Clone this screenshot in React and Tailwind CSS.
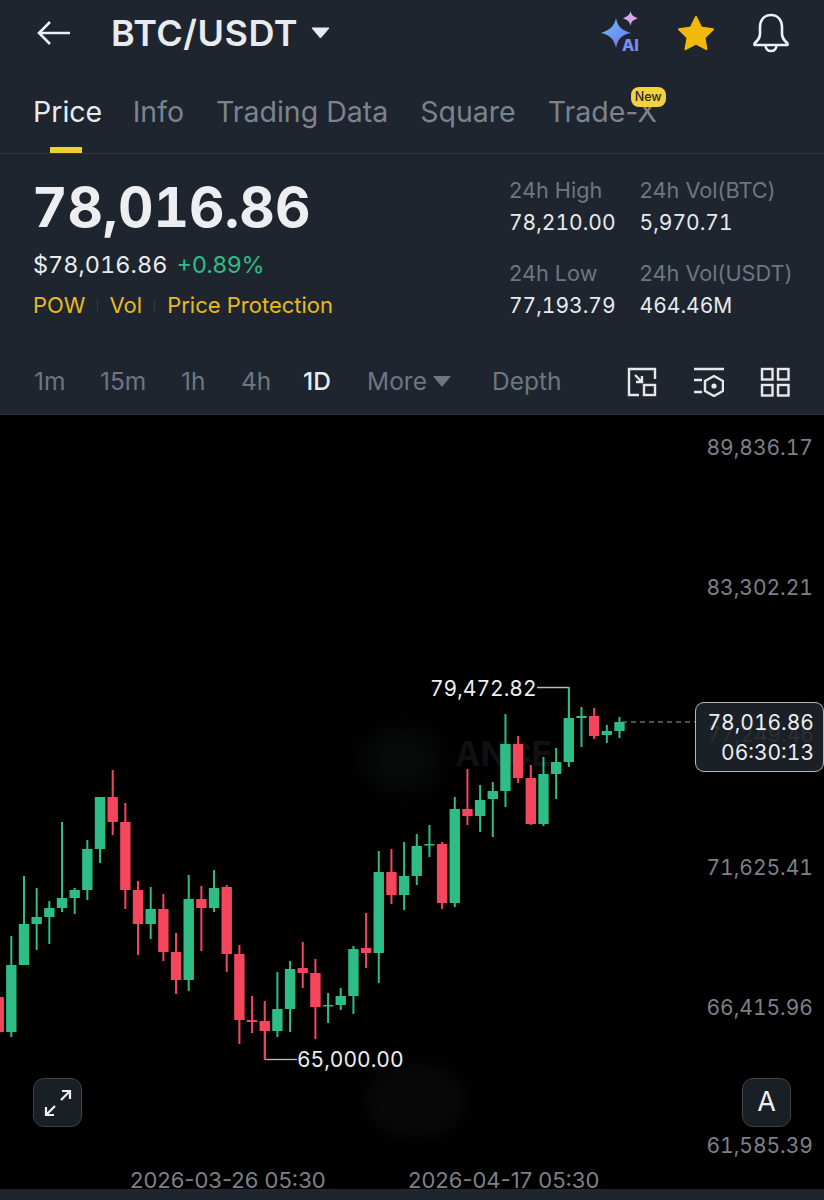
const GREEN = "#2ebd85";
const RED = "#f6465d";

// [index, up?, wickTop, wickBottom, bodyTop, bodyBottom] in page pixels
const CANDLES = [
  [-1, 0, 975, 1037, 997, 1032],
  [0, 1, 936, 1037, 965, 1032],
  [1, 1, 876, 965, 924, 965],
  [2, 1, 888, 950, 917, 924],
  [3, 1, 901, 944, 908, 917],
  [4, 1, 822, 912, 898, 908],
  [5, 1, 888, 914, 890, 898],
  [6, 1, 840, 900, 849, 890],
  [7, 1, 797, 863, 797, 849],
  [8, 0, 770, 835, 797, 822],
  [9, 0, 803, 909, 822, 890],
  [10, 0, 881, 955, 890, 924],
  [11, 1, 887, 939, 909, 924],
  [12, 0, 894, 961, 909, 952],
  [13, 0, 933, 994, 952, 980],
  [14, 1, 875, 991, 899, 980],
  [15, 0, 886, 951, 899, 908],
  [16, 1, 870, 912, 888, 908],
  [17, 0, 885, 972, 887, 954],
  [18, 0, 945, 1044, 954, 1020],
  [19, 0, 996, 1033, 1020, 1022],
  [20, 0, 1001, 1060, 1021, 1031],
  [21, 1, 972, 1037, 1009, 1031],
  [22, 1, 961, 1032, 969, 1009],
  [23, 0, 942, 988, 968, 973],
  [24, 0, 959, 1039, 973, 1007],
  [25, 1, 993, 1023, 1005, 1006],
  [26, 1, 988, 1010, 996, 1005],
  [27, 1, 946, 1014, 949, 996],
  [28, 0, 913, 968, 948, 953],
  [29, 1, 851, 983, 872, 953],
  [30, 0, 849, 904, 872, 895],
  [31, 1, 842, 910, 876, 895],
  [32, 1, 834, 885, 846, 876],
  [33, 1, 825, 857, 844, 845],
  [34, 0, 842, 909, 844, 903],
  [35, 1, 797, 907, 809, 903],
  [36, 0, 769, 825, 809, 816],
  [37, 1, 785, 832, 800, 816],
  [38, 1, 782, 837, 791, 799],
  [39, 1, 714, 807, 744, 791],
  [40, 0, 736, 783, 744, 778],
  [41, 0, 765, 825, 778, 824],
  [42, 1, 757, 826, 774, 824],
  [43, 1, 748, 799, 762, 774],
  [44, 1, 687, 767, 718, 762],
  [45, 1, 707, 747, 716, 718],
  [46, 0, 708, 739, 716, 736],
  [47, 1, 725, 743, 731, 735],
  [48, 1, 717, 738, 722, 731],
];

function CandleChart() {
  return (
    <svg className="absolute inset-0" width="824" height="774" viewBox="0 415 824 774">
      {/* high / low leader lines */}
      <path d="M537 687.5H569V718" fill="none" stroke="#b9bdc1" strokeWidth="1.3" />
      <path d="M265 1031V1059" fill="none" stroke={RED} strokeWidth="1.5" />
      <path d="M265 1059.5H297" fill="none" stroke="#b9bdc1" strokeWidth="1.3" />
      <path d="M622 722H695" fill="none" stroke="#9a9ea3" strokeWidth="1" strokeDasharray="5 4" />
      {CANDLES.map(([i, up, wt, wb, bt, bb]) => {
        const x = 11.33 + 12.67 * i;
        const color = up ? GREEN : RED;
        return (
          <g key={i} fill={color}>
            <rect x={x - 1} y={wt} width="2" height={wb - wt} />
            <rect x={x - 5.2} y={bt} width="10.4" height={Math.max(bb - bt, 1.6)} rx="0.6" />
          </g>
        );
      })}
    </svg>
  );
}

function AiIcon() {
  return (
    <svg width="44" height="44" viewBox="0 0 44 44">
      <defs>
        <linearGradient id="spark" x1="0" y1="0" x2="1" y2="1">
          <stop offset="0" stopColor="#6fc3f7" />
          <stop offset="1" stopColor="#6a6cf0" />
        </linearGradient>
      </defs>
      <path d="M16 7C17.5 15 21 19 31 22C21 24 18 28 16 37C14 28 10 24 1 22C10 19 14.5 15 16 7Z" fill="url(#spark)" />
      <path d="M30.5 0C31.2 3.5 32.5 5 38 7.5C32.5 9 31.2 11 30.5 15C29.8 11 28 9 23 7.5C28 5 29.8 3.5 30.5 0Z" fill="#d5a4ea" />
      <text x="22" y="40" fontSize="16" fontWeight="800" fill="#7f8df2" fontFamily="Inter, sans-serif">AI</text>
    </svg>
  );
}

function StarIcon() {
  return (
    <svg width="38" height="36" viewBox="0 0 38 36">
      <path
        d="M19 2L24.3 12.6L36 14.3L27.5 22.6L29.5 34.2L19 28.7L8.5 34.2L10.5 22.6L2 14.3L13.7 12.6Z"
        fill="#f0b90b"
        stroke="#f0b90b"
        strokeWidth="2"
        strokeLinejoin="round"
      />
    </svg>
  );
}

function BellIcon() {
  return (
    <svg width="38" height="40" viewBox="0 0 38 40" fill="none" stroke="#eef0f3" strokeWidth="2.6" strokeLinejoin="round">
      <path d="M19 2C11.5 2 8 8 8 14V21C8 25 6 27 2.5 30.5V32H35.5V30.5C32 27 30 25 30 21V14C30 8 26.5 2 19 2Z" />
      <path d="M13.5 32C13.5 36 16 38 19 38C22 38 24.5 36 24.5 32" />
    </svg>
  );
}

function ChartIcons() {
  return (
    <div className="flex items-center gap-[36px] text-[#e6e8ea]">
      <svg width="30" height="30" viewBox="0 0 30 30" fill="none" stroke="currentColor" strokeWidth="2.4">
        <path d="M12 28H2V2H28V12" />
        <rect x="17" y="18" width="11" height="10" />
        <path d="M8 8L15 15M15 9V15H9" />
      </svg>
      <svg width="31" height="30" viewBox="0 0 31 30" fill="none" stroke="currentColor" strokeWidth="2.4">
        <path d="M1 2H31M1 13H9M1 25H9" />
        <path d="M21 9L30 14V24L21 29L12 24V14Z" />
        <circle cx="21" cy="19" r="2.6" fill="currentColor" stroke="none" />
      </svg>
      <svg width="30" height="30" viewBox="0 0 30 30" fill="none" stroke="currentColor" strokeWidth="2.4">
        <rect x="2" y="2" width="10.5" height="10.5" />
        <rect x="18" y="2" width="10.5" height="10.5" />
        <rect x="2" y="18" width="10.5" height="10.5" />
        <rect x="18" y="18" width="10.5" height="10.5" />
      </svg>
    </div>
  );
}

function Stat({ label, value }) {
  return (
    <div className="flex flex-col gap-[7px]">
      <span className="text-[21.7px] leading-[25px] text-[#6f7680] whitespace-nowrap">{label}</span>
      <span className="text-[21px] leading-[25px] text-[#e8eaed] whitespace-nowrap tabular-nums">{value}</span>
    </div>
  );
}

function AxisLabel({ top, children }) {
  return (
    <span className={`absolute right-[11px] text-[21px] leading-[26px] text-[#7d8187] tabular-nums ${top}`}>{children}</span>
  );
}

export default function App() {
  return (
    <div className="w-[824px] h-[1200px] overflow-hidden bg-[#1e252e] font-['Inter',sans-serif]">
      {/* top bar */}
      <div className="h-[66px] flex items-center pl-[37px] pr-[34px]">
        <svg width="34" height="26" viewBox="0 0 34 26" fill="none" stroke="#eef0f3" strokeWidth="2.6">
          <path d="M33 13H3M13 2L2 13L13 24" />
        </svg>
        <span className="ml-[40px] text-[36px] font-semibold text-[#e9ecef] leading-none tracking-[0.5px]">BTC/USDT</span>
        <svg className="ml-[13px]" width="19" height="12" viewBox="0 0 19 12">
          <path d="M1 1H18L9.5 11Z" fill="#e9ecef" stroke="#e9ecef" strokeLinejoin="round" />
        </svg>
        <div className="ml-auto flex items-center">
          <AiIcon />
          <div className="ml-[33px]">
            <StarIcon />
          </div>
          <div className="ml-[37px]">
            <BellIcon />
          </div>
        </div>
      </div>

      {/* tabs */}
      <div className="h-[88px] flex gap-[32px] pl-[33px] border-b border-[#2e353f] text-[28.5px] text-[#7c838d]">
        <div className="relative h-full flex items-center pt-[6px] -mr-[1.5px] text-[#e9ecef]">
          Price
          <span className="absolute bottom-0 left-[17px] w-[32px] h-[6px] bg-[#f0cf2e]" />
        </div>
        <div className="flex items-center pt-[6px]">Info</div>
        <div className="flex items-center pt-[6px]">Trading Data</div>
        <div className="flex items-center pt-[6px]">Square</div>
        <div className="relative flex items-center pt-[6px]">
          Trade-X
          <span className="absolute top-[21px] left-[83px] h-[20px] w-[35px] rounded-[8px] bg-[#f5d13c] text-center text-[12.5px] font-medium leading-[20px] text-[#262a30]">
            New
          </span>
        </div>
      </div>

      {/* price summary */}
      <div className="h-[189px] flex pl-[33px] pt-[20px]">
        <div className="w-[476px]">
          <div className="text-[55px] leading-[66px] font-bold text-[#eceef1] tabular-nums -ml-[1px]">78,016.86</div>
          <div className="mt-[10px] flex items-baseline gap-[9px] text-[23.5px] leading-[30px]">
            <span className="text-[#e9ecef] tabular-nums">$78,016.86</span>
            <span className="text-[#2ebd85]">+0.89%</span>
          </div>
          <div className="mt-[10px] flex items-center text-[22px] leading-[30px] text-[#e8b923]">
            <span>POW</span>
            <span className="mx-[11.5px] w-[1px] h-[12px] bg-[#333a44]" />
            <span>Vol</span>
            <span className="mx-[12px] w-[1px] h-[12px] bg-[#333a44]" />
            <span>Price Protection</span>
          </div>
        </div>
        <div className="flex gap-[24px] pt-[4px]">
          <div className="flex flex-col gap-[26px]">
            <Stat label="24h High" value="78,210.00" />
            <Stat label="24h Low" value="77,193.79" />
          </div>
          <div className="flex flex-col gap-[26px]">
            <Stat label="24h Vol(BTC)" value="5,970.71" />
            <Stat label="24h Vol(USDT)" value="464.46M" />
          </div>
        </div>
      </div>

      {/* timeframes */}
      <div className="h-[72px] flex items-center pl-[34px] pr-[34px] pt-[6px] text-[24.5px] text-[#6f7680] border-b border-[#2a313a]">
        <div className="flex items-center">
          <span className="w-[66px]">1m</span>
          <span className="w-[81px]">15m</span>
          <span className="w-[60px]">1h</span>
          <span className="w-[62px]">4h</span>
          <span className="w-[64px] text-[#e9ecef] font-medium">1D</span>
          <span className="w-[125px] flex items-center gap-[6px]">
            More
            <svg width="18" height="11" viewBox="0 0 18 11">
              <path d="M0 0H18L9 11Z" fill="#6f7680" />
            </svg>
          </span>
          <span>Depth</span>
        </div>
        <div className="ml-auto">
          <ChartIcons />
        </div>
      </div>

      {/* chart */}
      <div className="relative h-[774px] bg-black">
        <span className="absolute left-[455px] top-[322px] text-[34px] font-bold leading-none text-[#101112]">ANCE</span>
        <div className="absolute left-[365px] top-[315px] w-[75px] h-[60px] rounded-full bg-[#090a0a] blur-md" />
        <div className="absolute left-[365px] top-[650px] w-[100px] h-[72px] rounded-[40px] bg-[#080808] blur-sm" />

        <CandleChart />

        <AxisLabel top="top-[20px]">89,836.17</AxisLabel>
        <AxisLabel top="top-[160px]">83,302.21</AxisLabel>
        <AxisLabel top="top-[440px]">71,625.41</AxisLabel>
        <AxisLabel top="top-[580px]">66,415.96</AxisLabel>
        <AxisLabel top="top-[718px]">61,585.39</AxisLabel>

        <span className="absolute left-[430px] top-[261px] text-[21px] leading-[26px] text-[#eceef1] tabular-nums">79,472.82</span>
        <span className="absolute left-[297px] top-[632px] text-[21px] leading-[26px] text-[#eceef1] tabular-nums">65,000.00</span>

        {/* last price tag */}
        <div className="absolute left-[695px] top-[287px] w-[129px] h-[70px] rounded-[9px] border border-[#b5b9bd] bg-[#1b2026] pr-[9px] pt-[5px] text-right text-[21px] leading-[30px] text-[#eceef1] tabular-nums">
          <span className="absolute right-[9px] top-[17px] text-[#2b3036]">77,249.46</span>
          <div className="relative">78,016.86</div>
          <div className="relative">06:30:13</div>
        </div>

        <button className="absolute left-[33px] top-[663px] w-[49px] h-[49px] rounded-[11px] border border-[#3a4149] bg-[#1a1f25] flex items-center justify-center">
          <svg width="30" height="30" viewBox="0 0 30 30" fill="none" stroke="#eef0f3" strokeWidth="2.2">
            <path d="M18 12L27 3M19 3H27V11M12 18L3 27M3 19V27H11" />
          </svg>
        </button>
        <button className="absolute left-[742px] top-[663px] w-[49px] h-[49px] rounded-[11px] border border-[#3a4149] bg-[#1a1f25] text-[27px] text-[#eef0f3] flex items-center justify-center">
          A
        </button>

        <span className="absolute left-[130px] top-[752px] text-[22px] leading-[26px] text-[#7d8187] whitespace-nowrap">2026-03-26 05:30</span>
        <span className="absolute left-[408px] top-[752px] text-[22px] leading-[26px] text-[#7d8187] whitespace-nowrap">2026-04-17 05:30</span>
      </div>
    </div>
  );
}
